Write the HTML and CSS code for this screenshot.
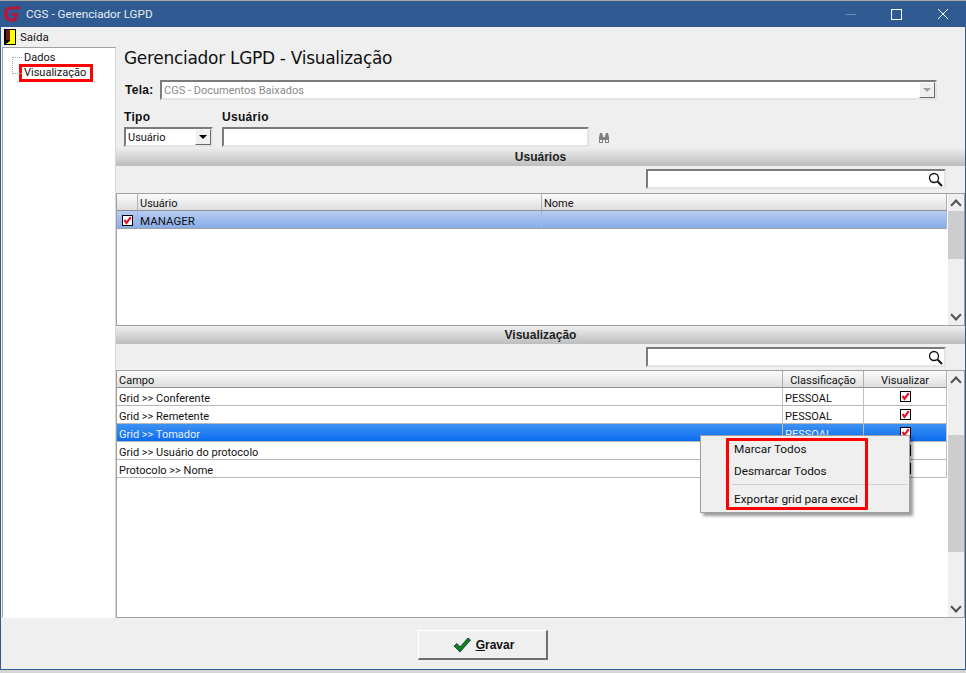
FILE: index.html
```html
<!DOCTYPE html>
<html lang="pt">
<head>
<meta charset="utf-8">
<title>CGS - Gerenciador LGPD</title>
<link rel="stylesheet" href="styles.css">
</head>
<body>
<svg class="defs" width="0" height="0"><defs><g id="chk"><rect x=".5" y=".5" width="10" height="10" fill="#fff" stroke="#000"/><path d="M2.500 5 L4.500 7.800 L8.800 2.200" fill="none" stroke="#e8102a" stroke-width="2.200"/></g></defs></svg>
<div class="window">
  <header class="titlebar">
    <svg class="logo" width="17" height="16" viewBox="0 0 17 16"><path d="M16.500 0.500 H7 C2.500 0.500 0 4 0 8 C0 12.500 2.500 15.500 7 15.500 H12 L14.500 7 H7.500 L6.500 9.500 H10.500 L9.800 12.500 H7 C5 12.500 3.700 10.500 3.700 8 C3.700 5.500 5 3.500 7.500 3.500 H15.500 Z" fill="#b3173a"/></svg>
    <span class="title">CGS - Gerenciador LGPD</span>
    <div class="controls">
      <span class="ctl"><svg width="12" height="12" viewBox="0 0 12 12"><path d="M1 6.500 H11" stroke="#6f8fb8" fill="none"/></svg></span>
      <span class="ctl"><svg width="12" height="12" viewBox="0 0 12 12"><rect x=".5" y="1.500" width="10" height="10" stroke="#fff" fill="none"/></svg></span>
      <span class="ctl"><svg width="12" height="12" viewBox="0 0 12 12"><path d="M1 1 L11 11 M11 1 L1 11" stroke="#fff" fill="none"/></svg></span>
    </div>
  </header>
  <nav class="menubar">
    <svg width="12" height="16" viewBox="0 0 12 16"><rect width="12" height="16" fill="#000"/><path d="M6 1 H11 V15 H2 L6 12 Z" fill="#ffff00"/><rect x="2" y="1" width="4" height="10" fill="#6e1a10"/></svg>
    <span class="menuitem">Saída</span>
  </nav>
  <div class="main">
    <aside class="tree">
      <div class="node"><span class="dots"></span>Dados</div>
      <div class="node"><span class="dots dots-tall"></span><span class="marked">Visualização</span></div>
    </aside>
    <section class="content">
      <h1 class="heading">Gerenciador LGPD - Visualização</h1>
      <div class="tela-row">
        <label class="label tela-label">Tela:</label>
        <div class="field combo disabled"><span class="value">CGS - Documentos Baixados</span><span class="drop"><i class="arrow gray"></i></span></div>
      </div>
      <div class="filter-row">
        <div class="col-tipo">
          <label class="label">Tipo</label>
          <div class="field combo"><span class="value">Usuário</span><span class="drop"><i class="arrow"></i></span></div>
        </div>
        <div class="col-user">
          <label class="label">Usuário</label>
          <div class="field"></div>
        </div>
        <svg class="binoc" width="12" height="11" viewBox="0 0 12 11"><path d="M1 4 L2 0 H4 L5 3 V4 H7 V3 L8 0 H10 L11 4 V10 H7 V7 H5 V10 H1 Z" fill="#808080"/><rect x="2" y="7" width="2" height="2" fill="#efefef"/><rect x="8" y="7" width="2" height="2" fill="#efefef"/></svg>
      </div>
      <div class="band">Usuários</div>
      <div class="search-row search-users">
        <div class="field search"><svg width="15" height="15" viewBox="0 0 15 15"><circle cx="6" cy="6" r="4.500" stroke="#111" stroke-width="1.300" fill="none"/><path d="M9.500 9.500 L14 14" stroke="#111" stroke-width="2"/></svg></div>
      </div>
      <div class="grid grid-users">
        <div class="table t-users">
          <div class="th"></div><div class="th">Usuário</div><div class="th">Nome</div>
          <div class="td sel-soft tc"><svg class="check" width="11" height="11" viewBox="0 0 11 11"><use href="#chk"/></svg></div><div class="td sel-soft">MANAGER</div><div class="td sel-soft"></div>
        </div>
        <div class="scroll">
          <span class="chev up"></span>
          <div class="track"><div class="thumb thumb-users"></div></div>
          <span class="chev down"></span>
        </div>
      </div>
      <div class="band band-vis">Visualização</div>
      <div class="search-row search-vis">
        <div class="field search"><svg width="15" height="15" viewBox="0 0 15 15"><circle cx="6" cy="6" r="4.500" stroke="#111" stroke-width="1.300" fill="none"/><path d="M9.500 9.500 L14 14" stroke="#111" stroke-width="2"/></svg></div>
      </div>
      <div class="grid grid-vis">
        <div class="table t-vis">
          <div class="th">Campo</div><div class="th thc">Classificação</div><div class="th thc">Visualizar</div>
          <div class="td">Grid &gt;&gt; Conferente</div><div class="td">PESSOAL</div><div class="td tc"><svg class="check" width="11" height="11" viewBox="0 0 11 11"><use href="#chk"/></svg></div>
          <div class="td">Grid &gt;&gt; Remetente</div><div class="td">PESSOAL</div><div class="td tc"><svg class="check" width="11" height="11" viewBox="0 0 11 11"><use href="#chk"/></svg></div>
          <div class="td sel">Grid &gt;&gt; Tomador</div><div class="td sel">PESSOAL</div><div class="td sel tc"><svg class="check" width="11" height="11" viewBox="0 0 11 11"><use href="#chk"/></svg></div>
          <div class="td">Grid &gt;&gt; Usuário do protocolo</div><div class="td">PESSOAL</div><div class="td tc"><svg class="check" width="11" height="11" viewBox="0 0 11 11"><use href="#chk"/></svg></div>
          <div class="td">Protocolo &gt;&gt; Nome</div><div class="td">PESSOAL</div><div class="td tc"><svg class="check" width="11" height="11" viewBox="0 0 11 11"><use href="#chk"/></svg></div>
        </div>
        <div class="scroll">
          <span class="chev up"></span>
          <div class="track"><div class="thumb thumb-vis"></div></div>
          <span class="chev down"></span>
        </div>
      </div>
    </section>
  </div>
  <footer class="footer">
    <button class="btn">
      <svg width="18" height="16" viewBox="0 0 18 16"><path d="M1 9 L4 6.500 L7 10 L15 1 L17.500 3 L7 15 Z" fill="#0a8a0a" stroke="#06065a" stroke-width=".7"/></svg>
      <span><u>G</u>ravar</span>
    </button>
  </footer>
  <div class="menu">
    <div class="mi">Marcar Todos</div>
    <div class="mi mi2">Desmarcar Todos</div>
    <div class="sep"></div>
    <div class="mi">Exportar grid para excel</div>
  </div>
  <div class="redbox"></div>
</div>
</body>
</html>
```
FILE: styles.css
```css
* { box-sizing: border-box; }
html, body { margin: 0; padding: 0; }
body { width: 966px; height: 673px; background: #d4d4d4; font-family: Roboto, "Liberation Sans", Arial, sans-serif; font-size: 11px; color: #111; overflow: hidden; }
.defs { position: absolute; }
.window { position: relative; width: 966px; height: 670px; background: #efefef; border: solid #2f5b92; border-width: 0 1px 1px 1px; display: flex; flex-direction: column; }
.titlebar { height: 27px; flex: none; background: #2f5b92; border-top: 1px solid #a8a8a8; margin: 0 -1px; padding-left: 4px; display: flex; align-items: center; color: #e8edf4; font-size: 11.700px; }
.logo { margin-right: 5px; }
.title { flex: 1; }
.controls { display: flex; }
.ctl { width: 46px; height: 26px; display: flex; align-items: center; justify-content: center; }
.menubar { height: 20px; flex: none; display: flex; align-items: center; padding-left: 3px; gap: 4px; }
.menuitem { font-size: 11.500px; }
.main { flex: 1; display: flex; min-height: 0; }
.tree { width: 114px; flex: none; margin-left: 1px; background: #fff; border: 1px solid #a0a0a0; border-bottom-color: #fff; border-right-color: #d8d8d8; padding: 1px 0 0 9px; font-size: 11px; }
.node { height: 16px; display: flex; align-items: center; position: relative; padding-left: 12px; }
.dots { position: absolute; left: 0; top: 8px; width: 10px; height: 1px; border-top: 1px dotted #aaa; }
.dots-tall { top: -8px; height: 17px; border-top: 0; border-left: 1px dotted #aaa; border-bottom: 1px dotted #aaa; }
.marked { margin-left: -5px; width: 74px; height: 18px; flex: none; border: 3px solid #f00; padding-left: 2px; line-height: 12px; white-space: nowrap; }
.content { flex: 1; min-width: 0; display: flex; flex-direction: column; }
.heading { margin: 0; padding: 0 0 0 8px; height: 33px; font: 400 17px/22px "DejaVu Sans", Verdana, sans-serif; letter-spacing: -0.300px; color: #111; white-space: nowrap; }
.label { font: 700 12px "Liberation Sans", Arial, sans-serif; letter-spacing: .3px; }
.tela-row { display: flex; align-items: center; padding-left: 9px; height: 20px; }
.tela-label { width: 35px; flex: none; }
.field { height: 20px; background: #fff; border: 2px solid; border-color: #7b7b7b #e4e4e4 #e4e4e4 #7b7b7b; display: flex; align-items: center; }
.combo { justify-content: space-between; }
.tela-row .combo { width: 777px; }
.value { padding-left: 2px; }
.disabled .value { color: #8a8a8a; padding-top: 1px; }
.drop { width: 16px; height: 16px; background: #efefef; border: 1px solid; border-color: #fff #6b6b6b #6b6b6b #fff; display: flex; align-items: center; justify-content: center; }
.arrow { width: 0; height: 0; border: 4px solid transparent; border-top: 4px solid #000; border-bottom: 0; }
.arrow.gray { border-top-color: #a0a0a0; }
.filter-row { display: flex; align-items: flex-end; padding-left: 8px; height: 47px; flex: none; }
.col-tipo { width: 98px; display: flex; flex-direction: column; gap: 3px; }
.col-tipo .field { width: 89px; }
.col-user { width: 367px; display: flex; flex-direction: column; gap: 3px; }
.col-user .field { width: 100%; }
.binoc { margin: 0 0 3px 9px; }
.band { height: 19px; flex: none; padding-top: 3px; background: linear-gradient(#efefef, #bdbdbd); text-align: center; font: 700 12px/15px "Liberation Sans", Arial, sans-serif; color: #222; }
.band-vis { height: 18px; padding-top: 2px; }
.search-row { display: flex; justify-content: flex-end; padding-right: 19px; flex: none; }
.search-users { height: 27px; padding-top: 3px; }
.search-vis { height: 26px; padding-top: 3px; }
.search { width: 300px; justify-content: flex-end; padding-right: 1px; }
.grid { display: flex; background: #fff; border: 1px solid #a0a0a0; flex: none; }
.grid-users { height: 133px; }
.grid-vis { flex: 1; }
.table { flex: 1; display: grid; grid-template-rows: 17px; grid-auto-rows: 18px; align-content: start; }
.t-users { grid-template-columns: 21px 404px 1fr; }
.t-vis { grid-template-columns: 666px 81px 1fr; }
.th { background: linear-gradient(#fbfbfb, #dedede); border-right: 1px solid #b0b0b0; border-bottom: 1px solid #8f8f8f; padding: 2px 0 0 2px; line-height: 16px; white-space: nowrap; overflow: hidden; }
.thc { text-align: center; padding-left: 0; }
.td { border-right: 1px solid #c0c0c0; border-bottom: 1px solid #b8b8b8; padding: 3px 0 0 2px; line-height: 16px; white-space: nowrap; overflow: hidden; }
.t-users .td:nth-child(n) { border-right-color: #9fb7dc; border-bottom-color: #a0a0a0; font-size: 11.500px; padding-top: 2px; }
.td.tc { display: flex; justify-content: center; align-items: center; padding: 0; }
.t-users .td.tc:nth-child(n) { padding: 2px 0 0 0; }
.sel { background: linear-gradient(#3f92f2, #0b6cf0); color: #e8f0ff; }
.sel-soft { background: linear-gradient(#b7cdf2, #88ace8); }
.check { display: block; }
.scroll { width: 17px; flex: none; background: #efefef; border-left: 1px solid #fff; display: flex; flex-direction: column; }
.track { flex: 1; position: relative; }
.thumb { background: #cdcdcd; }
.thumb-users { height: 48px; }
.thumb-vis { height: 117px; margin-top: 47px; }
.chev { height: 17px; flex: none; display: flex; justify-content: center; align-items: center; }
.chev::before { content: ""; width: 6px; height: 6px; border: solid #505050; border-width: 2px 0 0 2px; transform: rotate(45deg); margin-top: 4px; }
.chev.down::before { transform: rotate(225deg); margin-top: -4px; }
.footer { height: 51px; flex: none; display: flex; justify-content: center; align-items: flex-start; padding-top: 12px; }
.btn { width: 130px; height: 30px; background: #efefef; border: solid; border-color: #fff #6e6e6e #6e6e6e #fff; border-width: 1px 2px 2px 1px; display: flex; align-items: center; justify-content: center; gap: 5px; font: 700 12px "Liberation Sans", Arial, sans-serif; color: #111; padding: 1px 0 0 2px; }
.menu { position: absolute; left: 699px; top: 435px; width: 210px; height: 78px; background: #efefef; border: 1px solid #a0a0a0; box-shadow: 3px 3px 3px rgba(0,0,0,.4); padding: 3px 0 0 33px; font-size: 11.800px; }
.mi { height: 20px; line-height: 20px; white-space: nowrap; }
.mi2 { margin-top: 2px; }
.sep { height: 1px; background: #d0d0d0; margin: 3px 2px 4px -2px; }
.redbox { position: absolute; left: 725px; top: 438px; width: 142px; height: 72px; border: 3px solid #f00; border-radius: 1px; }
```
